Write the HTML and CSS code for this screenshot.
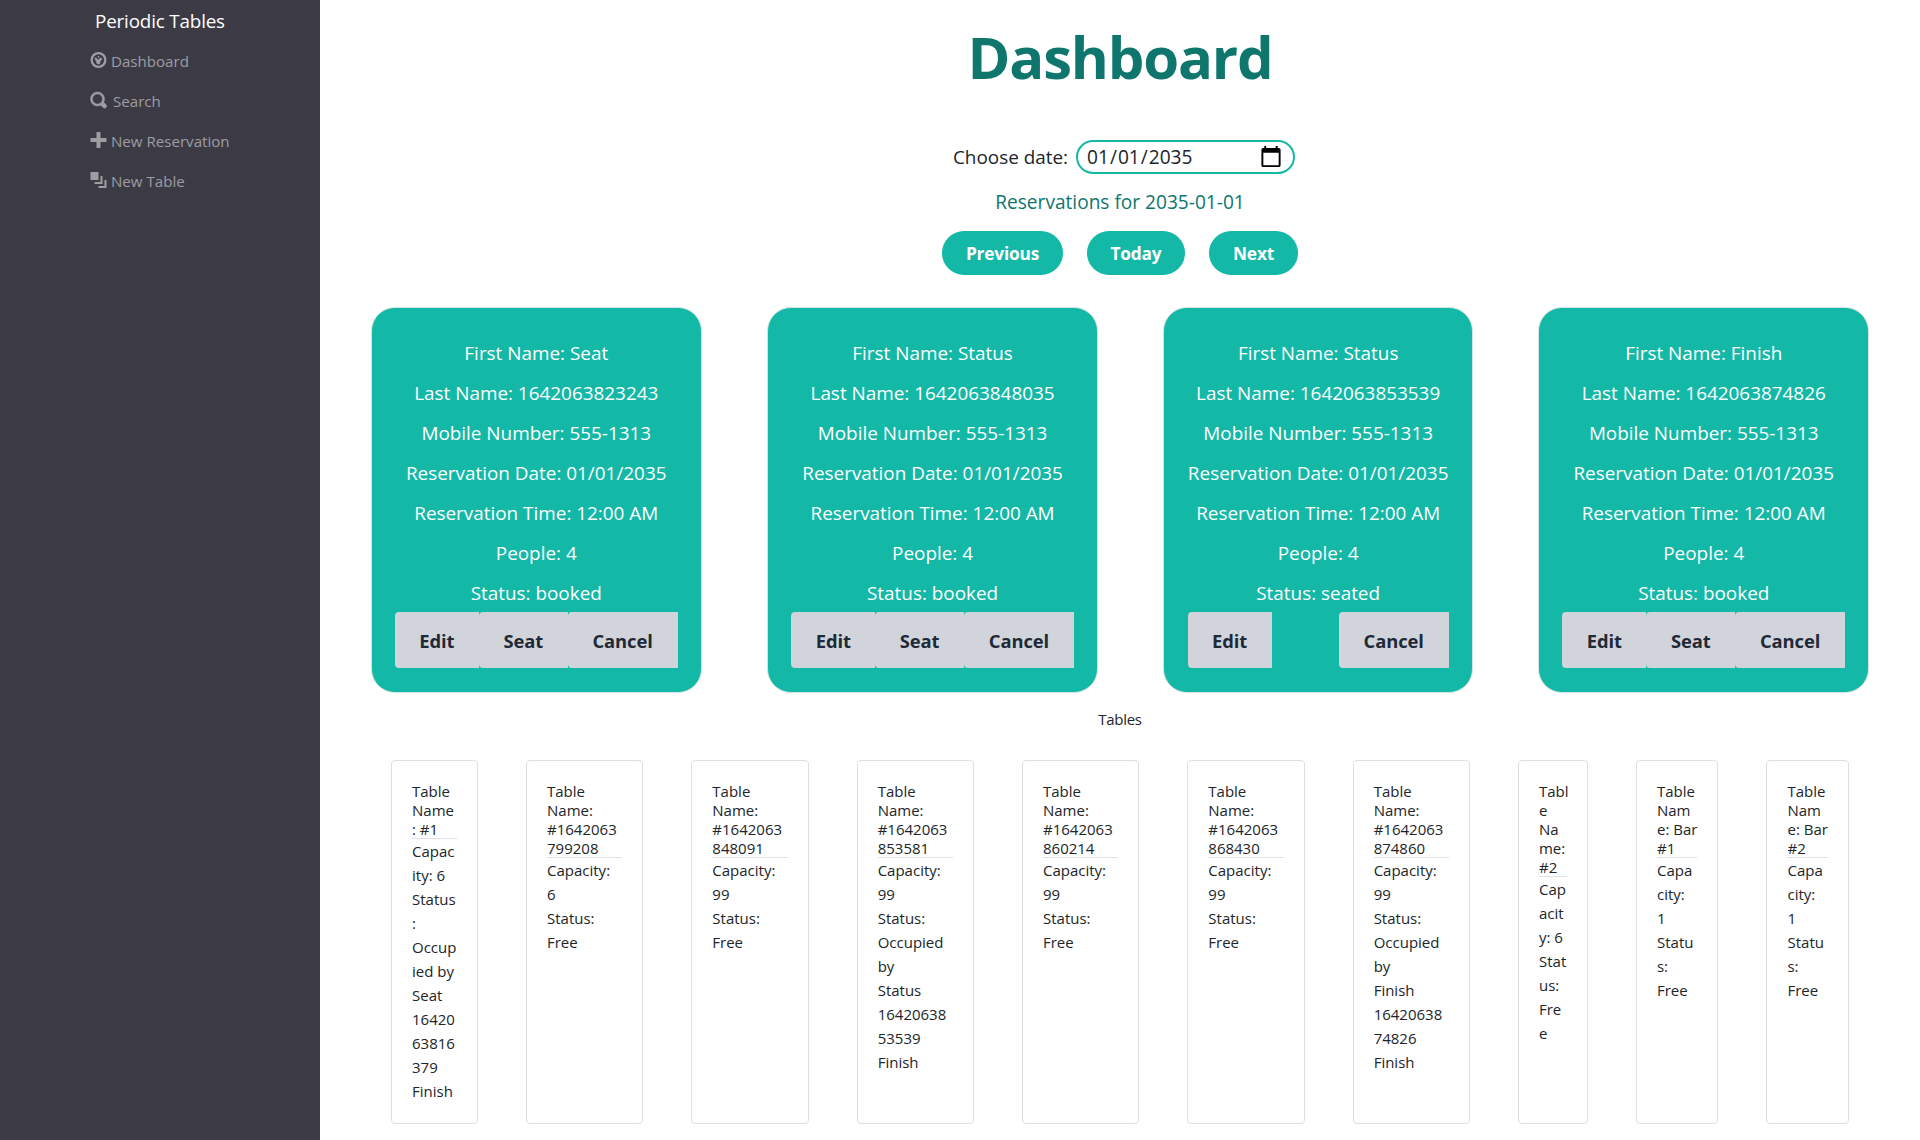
FILE: index.html
```html
<!DOCTYPE html>
<html lang="en">
<head>
<meta charset="utf-8">
<title>Periodic Tables</title>
<link rel="stylesheet" href="styles.css">
</head>
<body>
<div class="app">
  <nav class="sidebar">
    <a class="brand">Periodic Tables</a>
    <a class="nav-link"><svg class="icon" viewBox="0 0 8 8"><circle cx="4" cy="4" r="3.42" fill="none" stroke="currentColor" stroke-width="1.15"/><circle cx="4" cy="2.4" r=".45"/><circle cx="2.5" cy="3.2" r=".5"/><path d="M2.200 3.500l.7-.5 1 .9 1.200-1.200.8.800-1 1.200c.1 1-.4 1.400-1 1.400-.7 0-1.100-.5-1-1.200z"/></svg><span>Dashboard</span></a>
    <a class="nav-link nav-search"><svg class="icon icon-bold" viewBox="0 0 8 8"><path d="M3.5 0c-1.930 0-3.500 1.570-3.500 3.500s1.570 3.500 3.500 3.500c.59 0 1.170-.14 1.660-.41a1 1 0 0 0 .13.13l1 1a1.020 1.020 0 1 0 1.440-1.440l-1-1a1 1 0 0 0-.16-.13c.27-.49.44-1.060.44-1.660 0-1.930-1.550-3.500-3.500-3.500zm0 1c1.390 0 2.500 1.110 2.500 2.500 0 .66-.24 1.270-.66 1.720l-.03.03a1 1 0 0 0-.13.13c-.44.4-1.040.63-1.690.63-1.390 0-2.500-1.110-2.500-2.500s1.110-2.500 2.500-2.500z"/></svg><span>Search</span></a>
    <a class="nav-link"><svg class="icon" viewBox="0 0 8 8"><path d="M3 0v3h-3v2h3v3h2v-3h3v-2h-3v-3h-2z"/></svg><span>New Reservation</span></a>
    <a class="nav-link"><svg class="icon" viewBox="0 0 8 8"><path d="M0 0v4h4v-4h-4zm5 2v3h-3v1h4v-4h-1zm2 2v3h-3v1h4v-4h-1z"/></svg><span>New Table</span></a>
  </nav>
  <main class="main">
    <h1 class="title">Dashboard</h1>
    <div class="date-row">
      <label class="date-label" for="date">Choose date:</label>
      <input class="date-input" id="date" type="date" value="2035-01-01">
    </div>
    <h4 class="subtitle">Reservations for 2035-01-01</h4>
    <div class="pager">
      <button class="pill pill-prev">Previous</button>
      <button class="pill pill-today">Today</button>
      <button class="pill pill-next">Next</button>
    </div>
    <section class="reservations">
      <article class="reservation">
        <p>First Name: Seat</p><p>Last Name: 1642063823243</p><p>Mobile Number: 555-1313</p><p>Reservation Date: 01/01/2035</p><p>Reservation Time: 12:00 AM</p><p>People: 4</p><p>Status: booked</p>
        <div class="actions"><button class="action edit">Edit</button><button class="action seat">Seat</button><button class="action cancel">Cancel</button></div>
      </article>
      <article class="reservation">
        <p>First Name: Status</p><p>Last Name: 1642063848035</p><p>Mobile Number: 555-1313</p><p>Reservation Date: 01/01/2035</p><p>Reservation Time: 12:00 AM</p><p>People: 4</p><p>Status: booked</p>
        <div class="actions"><button class="action edit">Edit</button><button class="action seat">Seat</button><button class="action cancel">Cancel</button></div>
      </article>
      <article class="reservation seated">
        <p>First Name: Status</p><p>Last Name: 1642063853539</p><p>Mobile Number: 555-1313</p><p>Reservation Date: 01/01/2035</p><p>Reservation Time: 12:00 AM</p><p>People: 4</p><p>Status: seated</p>
        <div class="actions"><button class="action edit">Edit</button><button class="action cancel">Cancel</button></div>
      </article>
      <article class="reservation">
        <p>First Name: Finish</p><p>Last Name: 1642063874826</p><p>Mobile Number: 555-1313</p><p>Reservation Date: 01/01/2035</p><p>Reservation Time: 12:00 AM</p><p>People: 4</p><p>Status: booked</p>
        <div class="actions"><button class="action edit">Edit</button><button class="action seat">Seat</button><button class="action cancel">Cancel</button></div>
      </article>
    </section>
    <h2 class="tables-title">Tables</h2>
    <section class="tables">
      <article class="table-card w-first"><h3>Table<br>Name<br>: #1</h3><p>Capac<br>ity: 6<br>Status<br>:<br>Occup<br>ied by<br>Seat<br>16420<br>63816<br>379<br>Finish</p></article>
      <article class="table-card"><h3>Table<br>Name:<br>#1642063<br>799208</h3><p>Capacity:<br>6<br>Status:<br>Free</p></article>
      <article class="table-card"><h3>Table<br>Name:<br>#1642063<br>848091</h3><p>Capacity:<br>99<br>Status:<br>Free</p></article>
      <article class="table-card"><h3>Table<br>Name:<br>#1642063<br>853581</h3><p>Capacity:<br>99<br>Status:<br>Occupied<br>by<br>Status<br>16420638<br>53539<br>Finish</p></article>
      <article class="table-card"><h3>Table<br>Name:<br>#1642063<br>860214</h3><p>Capacity:<br>99<br>Status:<br>Free</p></article>
      <article class="table-card"><h3>Table<br>Name:<br>#1642063<br>868430</h3><p>Capacity:<br>99<br>Status:<br>Free</p></article>
      <article class="table-card"><h3>Table<br>Name:<br>#1642063<br>874860</h3><p>Capacity:<br>99<br>Status:<br>Occupied<br>by<br>Finish<br>16420638<br>74826<br>Finish</p></article>
      <article class="table-card w-second"><h3>Tabl<br>e<br>Na<br>me:<br>#2</h3><p>Cap<br>acit<br>y: 6<br>Stat<br>us:<br>Fre<br>e</p></article>
      <article class="table-card w-bar"><h3>Table<br>Nam<br>e: Bar<br>#1</h3><p>Capa<br>city:<br>1<br>Statu<br>s:<br>Free</p></article>
      <article class="table-card w-bar"><h3>Table<br>Nam<br>e: Bar<br>#2</h3><p>Capa<br>city:<br>1<br>Statu<br>s:<br>Free</p></article>
    </section>
  </main>
</div>
</body>
</html>
```

FILE: styles.css
```css
* { box-sizing: border-box; }
body, h1, h2, h3, h4, p { margin: 0; font-weight: 400; }
body {
  font-family: "Open Sans", "Noto Sans", sans-serif;
  font-size: 15px;
  line-height: 24px;
  color: #212529;
  background: #fff;
  overflow: hidden;
}
button, input { font-family: inherit; }
.app { display: flex; height: 1140px; }

.sidebar {
  width: 320px;
  flex: none;
  padding: 1px 0 0 90px;
  background: #3c3b45;
  display: flex;
  flex-direction: column;
}
.brand { height: 40px; padding-left: 5px; line-height: 40px; font-size: 18.8px; letter-spacing: -0.15px; color: #fff; }
.nav-link { height: 40px; display: flex; align-items: center; gap: 4px; color: #9d9da2; font-size: 15.1px; }
.nav-search { gap: 6px; }
.icon { width: 17px; height: 16px; fill: currentColor; margin-top: -2px; overflow: visible; }
.icon-bold { stroke: currentColor; stroke-width: 0.25; }

.main { flex: 1; display: flex; flex-direction: column; align-items: center; }
.title { margin-top: 27px; height: 60px; line-height: 60px; font-size: 58px; font-weight: 700; letter-spacing: -1.2px; color: #0f766e; }
.date-row { margin-top: 53px; padding-left: 8px; display: flex; align-items: center; gap: 8px; font-size: 18.9px; }
.date-input {
  width: 219px; height: 34px; padding: 0 10px 0 8px;
  font-size: 19.1px; color: #212529;
  background: #fff; border: 2px solid #14b8a6; border-radius: 17px;
}
.date-input::-webkit-calendar-picker-indicator { width: 24px; height: 24px; padding: 0; }
.subtitle { margin-top: 16px; line-height: 24px; font-size: 19.1px; color: #0f766e; }
.pager { margin-top: 17px; display: flex; gap: 24px; }
.pill { height: 44px; padding: 0; border: 0; border-radius: 22px; background: #14b8a6; color: #fff; font-size: 17.3px; font-weight: 700; letter-spacing: -0.2px; }
.pill-prev { width: 121px; }
.pill-today { width: 98px; }
.pill-next { width: 89px; }

.reservations { align-self: stretch; margin-top: 32px; padding: 0 50.5px; display: flex; justify-content: space-between; }
.reservation {
  width: 331.5px; height: 386px; padding: 25px 23.5px 0;
  background: #14b8a6; border: 1px solid #d3e4e2; border-radius: 24px;
  color: #fff; text-align: center; font-size: 18.9px;
}
.reservation.seated { width: 310px; }
.reservation p { height: 40px; line-height: 40px; white-space: nowrap; }
.actions { margin-top: -1px; display: flex; justify-content: space-between; }
.action { height: 56px; padding: 0; border: 0; border-radius: 4px 0 0 4px; background: #d1d5db; color: #1f2937; font-size: 18.4px; font-weight: 700; letter-spacing: -0.1px; }
.edit { width: 84px; }
.seat { width: 89px; }
.cancel { width: 110px; }

.tables-title { margin-top: 14px; font-size: 15px; line-height: 24px; letter-spacing: -0.3px; }
.tables { align-self: stretch; margin-top: 29px; padding: 0 71px; display: flex; gap: 48px; }
.table-card { flex: 1; height: 364px; padding: 21px 20px; border: 1px solid #dfdfdf; border-radius: 4px; font-size: 15px; white-space: nowrap; }
.table-card h3 { font-size: 15px; line-height: 19px; box-shadow: inset 0 -1px #dee2e6; }
.w-first { flex: none; width: 87px; }
.w-second { flex: none; width: 70px; }
.w-bar { flex: none; width: 82.5px; }
```
